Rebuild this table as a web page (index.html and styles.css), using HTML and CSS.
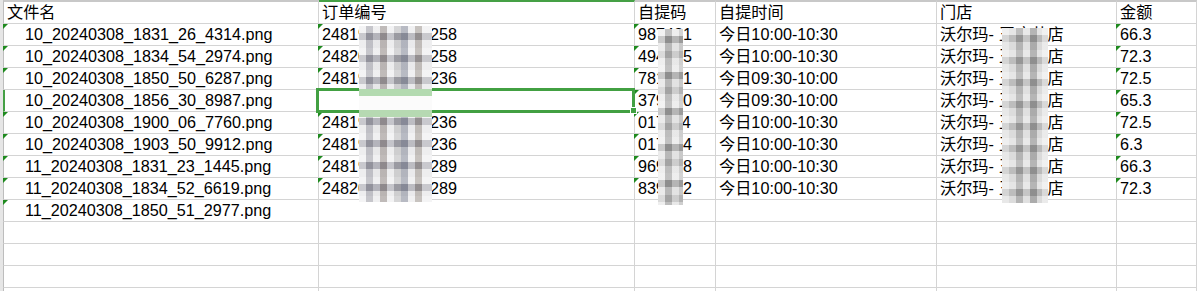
FILE: index.html
```html
<!DOCTYPE html>
<html lang="zh-CN">
<head>
<meta charset="utf-8">
<title>订单表</title>
<link rel="stylesheet" href="styles.css">
</head>
<body>
<div class="sheet">
  <div class="gutter"></div>
  <div class="grid">
    <div class="c hd a">文件名</div>
    <div class="c hd on">订单编号</div>
    <div class="c hd">自提码</div>
    <div class="c hd">自提时间</div>
    <div class="c hd">门店</div>
    <div class="c hd">金额</div>

    <div class="c a fn t">10_20240308_1831_26_4314.png</div>
    <div class="c t">248193650271258</div>
    <div class="c t">987421</div>
    <div class="c">今日10:00-10:30</div>
    <div class="c">沃尔玛<span class="dash">-</span>王府井店</div>
    <div class="c t">66.3</div>

    <div class="c a fn t">10_20240308_1834_54_2974.png</div>
    <div class="c t">248204417392258</div>
    <div class="c t">494825</div>
    <div class="c">今日10:00-10:30</div>
    <div class="c">沃尔玛<span class="dash">-</span>王府井店</div>
    <div class="c t">72.3</div>

    <div class="c a fn t">10_20240308_1850_50_6287.png</div>
    <div class="c t">248195128364236</div>
    <div class="c t">781231</div>
    <div class="c">今日09:30-10:00</div>
    <div class="c">沃尔玛<span class="dash">-</span>王府井店</div>
    <div class="c t">72.5</div>

    <div class="c a fn on">10_20240308_1856_30_8987.png</div>
    <div class="c sel"></div>
    <div class="c t">379120</div>
    <div class="c">今日09:30-10:00</div>
    <div class="c">沃尔玛<span class="dash">-</span>王府井店</div>
    <div class="c t">65.3</div>

    <div class="c a fn t">10_20240308_1900_06_7760.png</div>
    <div class="c t">248196203847236</div>
    <div class="c t">017114</div>
    <div class="c">今日10:00-10:30</div>
    <div class="c">沃尔玛<span class="dash">-</span>王府井店</div>
    <div class="c t">72.5</div>

    <div class="c a fn t">10_20240308_1903_50_9912.png</div>
    <div class="c t">248196204519236</div>
    <div class="c t">017314</div>
    <div class="c">今日10:00-10:30</div>
    <div class="c">沃尔玛<span class="dash">-</span>王府井店</div>
    <div class="c t">6.3</div>

    <div class="c a fn t">11_20240308_1831_23_1445.png</div>
    <div class="c t">248197751036289</div>
    <div class="c t">969518</div>
    <div class="c">今日10:00-10:30</div>
    <div class="c">沃尔玛<span class="dash">-</span>王府井店</div>
    <div class="c t">66.3</div>

    <div class="c a fn t">11_20240308_1834_52_6619.png</div>
    <div class="c t">248208862145289</div>
    <div class="c t">839412</div>
    <div class="c">今日10:00-10:30</div>
    <div class="c">沃尔玛<span class="dash">-</span>王府井店</div>
    <div class="c t">72.3</div>

    <div class="c a fn t">11_20240308_1850_51_2977.png</div>
    <div class="c"></div><div class="c"></div><div class="c"></div><div class="c"></div><div class="c"></div>

    <div class="c a"></div><div class="c"></div><div class="c"></div><div class="c"></div><div class="c"></div><div class="c"></div>
    <div class="c a"></div><div class="c"></div><div class="c"></div><div class="c"></div><div class="c"></div><div class="c"></div>
    <div class="c a"></div><div class="c"></div><div class="c"></div><div class="c"></div><div class="c"></div><div class="c"></div>
    <div class="c a"></div><div class="c"></div><div class="c"></div><div class="c"></div><div class="c"></div><div class="c"></div>
  </div>

  <div class="mosaic mb">
    <div class="mpart mb-top"></div>
    <div class="mpart mb-sel"></div>
    <div class="mpart mb-bot"></div>
  </div>
  <div class="mosaic mc"></div>
  <div class="mosaic me"></div>
</div>
</body>
</html>
```

FILE: styles.css
```css
html, body {
  margin: 0;
  background: #fff;
}

body {
  font-family: "Liberation Sans", "Noto Sans CJK SC", sans-serif;
  font-size: 16.2px;
  color: #000;
  width: 1197px;
  height: 291px;
  overflow: hidden;
}

.sheet {
  position: relative;
  display: flex;
  height: 291px;
  overflow: hidden;
}

.gutter {
  flex: none;
  width: 3px;
  background: #e6e6e6;
}

.grid {
  flex: 1;
  display: grid;
  grid-template-columns: 316px 316px 81px 221px 180px 1fr;
  grid-template-rows: 24px;
  grid-auto-rows: 22px;
  align-content: start;
}

.c {
  position: relative;
  box-sizing: border-box;
  border-right: 1px solid #d4d4d4;
  border-bottom: 1px solid #d4d4d4;
  padding-left: 3px;
  line-height: 21px;
  white-space: nowrap;
}

.hd {
  border-top: 2px solid #c8c8c8;
}

.hd.on {
  border-top-color: #45a045;
}

.a {
  border-left: 1px solid #bdbdbd;
}

.fn {
  padding-left: 21px;
}

.a.on {
  border-left: 2px solid #45a045;
  padding-left: 20px;
}

.dash {
  letter-spacing: 5px;
}

/* green "number stored as text" marker */
.t::before {
  content: "";
  position: absolute;
  left: -1px;
  top: 0;
  width: 0;
  height: 0;
  border-top: 5px solid #1f8a1f;
  border-right: 5px solid transparent;
  z-index: 1;
}

/* selected cell */
.sel::before {
  content: "";
  position: absolute;
  left: -3px;
  top: -2px;
  width: 319px;
  height: 25px;
  box-sizing: border-box;
  border: 3px solid #42a042;
  z-index: 2;
}

.sel::after {
  content: "";
  position: absolute;
  right: -3px;
  bottom: -3px;
  width: 5px;
  height: 5px;
  background: #42a042;
  border: 1px solid #fff;
  z-index: 3;
}

/* pixelated redaction overlays */
.mosaic {
  position: absolute;
  z-index: 5;
}

.mb {
  left: 359px;
  top: 26px;
  width: 73px;
  height: 176px;
  display: flex;
  flex-direction: column;
}

.mpart {
  flex: none;
  background-color: #dcdcdf;
  background-image:
    repeating-linear-gradient(90deg,
      rgba(255,255,255,.35) 0 7px, rgba(40,40,60,.2) 7px 14px,
      rgba(255,255,255,.1) 14px 21px, rgba(60,40,30,.26) 21px 28px,
      rgba(255,255,255,.3) 28px 35px, rgba(0,0,0,.1) 35px 42px,
      rgba(30,40,70,.26) 42px 49px, rgba(255,255,255,.2) 49px 56px,
      rgba(60,40,20,.22) 56px 63px, rgba(255,255,255,.35) 63px 73px),
    repeating-linear-gradient(180deg,
      rgba(255,255,255,.5) 0 7px, rgba(20,20,40,.24) 7px 14px,
      rgba(255,255,255,.25) 14px 22px);
}

.mb-top {
  height: 63px;
}

.mb-sel {
  height: 28px;
  background: linear-gradient(180deg, #b3dab0 0 7px, #fbfbfb 7px 21px, #b6d9b2 21px 28px);
}

.mb-bot {
  height: 85px;
  background-position: 0 -6px, 0 -6px;
}

.mc {
  left: 658px;
  top: 29px;
  width: 25px;
  height: 176px;
  background-color: #d8d8d8;
  background-image:
    repeating-linear-gradient(90deg,
      rgba(255,255,255,.35) 0 7px, rgba(0,0,0,.18) 7px 14px,
      rgba(255,255,255,.1) 14px 21px, rgba(0,0,0,.1) 21px 25px),
    repeating-linear-gradient(180deg,
      rgba(255,255,255,.5) 0 7px, rgba(0,0,0,.2) 7px 14px,
      rgba(255,255,255,.2) 14px 22px, rgba(0,0,0,.08) 22px 29px,
      rgba(255,255,255,.35) 29px 36px);
}

.me {
  left: 1002px;
  top: 28px;
  width: 46px;
  height: 175px;
  background-color: #cfcfcf;
  background-image:
    repeating-linear-gradient(90deg,
      rgba(255,255,255,.45) 0 7px, rgba(255,255,255,.15) 7px 14px,
      rgba(0,0,0,.16) 14px 21px, rgba(255,255,255,.25) 21px 28px,
      rgba(0,0,0,.2) 28px 35px, rgba(255,255,255,.1) 35px 40px,
      rgba(255,255,255,.5) 40px 46px),
    repeating-linear-gradient(180deg,
      rgba(255,255,255,.4) 0 7px, rgba(0,0,0,.14) 7px 14px,
      rgba(255,255,255,.15) 14px 22px);
}
```
